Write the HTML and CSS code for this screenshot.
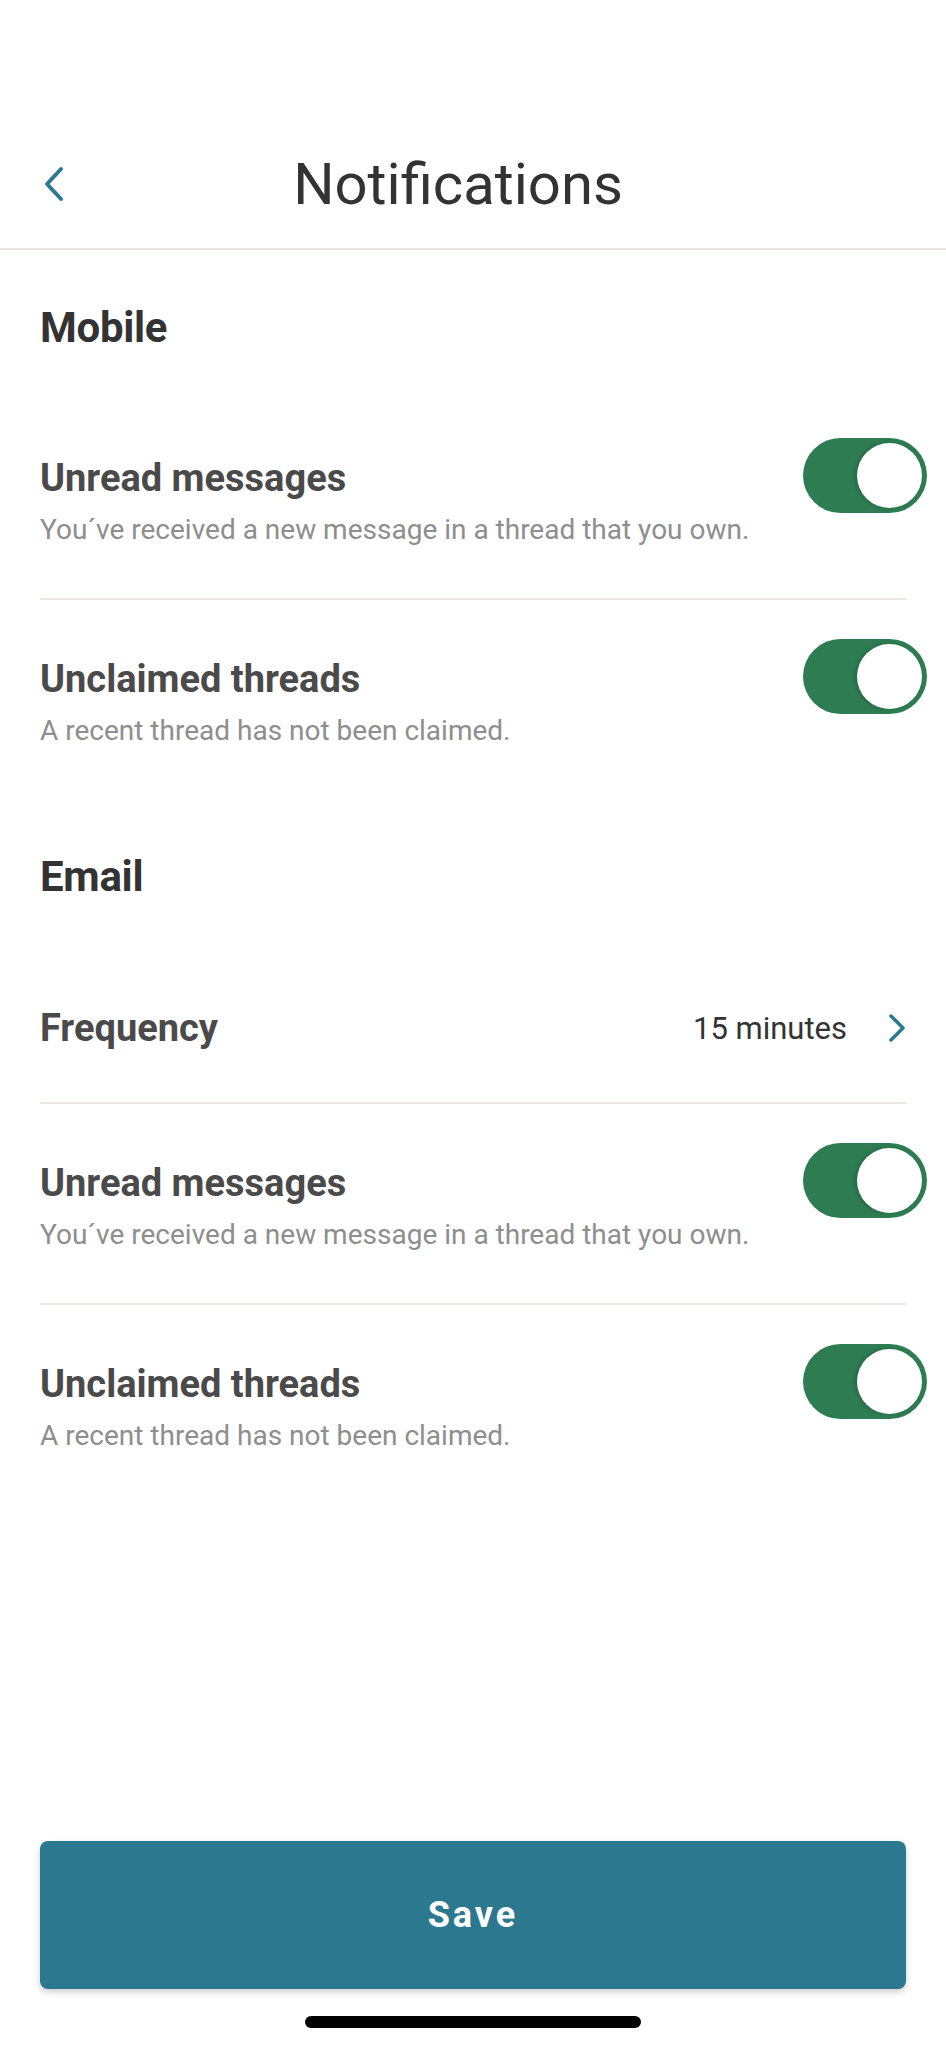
FILE: index.html
```html
<!DOCTYPE html>
<html lang="en">
<head>
    <meta charset="UTF-8">
    <meta name="viewport" content="width=device-width, initial-scale=1.0">
    <title>Notifications</title>
    <link rel="stylesheet" href="styles.css">
</head>
<body>
    <div class="page">
        <header class="topbar">
            <a class="back" href="#">
                <svg width="20" height="36" viewBox="0 0 20 36">
                    <path d="M17 3 L3 18 L17 33" fill="none" stroke="#2b7a91" stroke-width="4" stroke-linecap="round" stroke-linejoin="round"/>
                </svg>
            </a>
            <h1 class="title">Notifications</h1>
            <div class="spacer"></div>
        </header>

        <section class="section">
            <h2>Mobile</h2>
            <div class="row">
                <div class="row-text">
                    <div class="row-title">Unread messages</div>
                    <div class="row-sub">You´ve received a new message in a thread that you own.</div>
                </div>
                <div class="toggle"><span class="knob"></span></div>
            </div>
            <div class="row">
                <div class="row-text">
                    <div class="row-title">Unclaimed threads</div>
                    <div class="row-sub">A recent thread has not been claimed.</div>
                </div>
                <div class="toggle"><span class="knob"></span></div>
            </div>
        </section>

        <section class="section">
            <h2>Email</h2>
            <div class="row row-link">
                <div class="row-title">Frequency</div>
                <div class="row-value">
                    <span>15 minutes</span>
                    <svg width="18" height="30" viewBox="0 0 18 30">
                        <path d="M3 3 L15 15 L3 27" fill="none" stroke="#2b7a91" stroke-width="3.5" stroke-linecap="round" stroke-linejoin="round"/>
                    </svg>
                </div>
            </div>
            <div class="row">
                <div class="row-text">
                    <div class="row-title">Unread messages</div>
                    <div class="row-sub">You´ve received a new message in a thread that you own.</div>
                </div>
                <div class="toggle"><span class="knob"></span></div>
            </div>
            <div class="row">
                <div class="row-text">
                    <div class="row-title">Unclaimed threads</div>
                    <div class="row-sub">A recent thread has not been claimed.</div>
                </div>
                <div class="toggle"><span class="knob"></span></div>
            </div>
        </section>

        <footer class="footer">
            <button class="save" type="button">Save</button>
            <div class="home-bar"></div>
        </footer>
    </div>
</body>
</html>
```

FILE: styles.css
```css
html, body {
    margin: 0;
    padding: 0;
    background-color: #fff;
}
body {
    font-family: Roboto, "Liberation Sans", sans-serif;
    color: #333;
}
.page {
    width: 946px;
    min-height: 2048px;
    display: flex;
    flex-direction: column;
}
.topbar {
    height: 250px;
    box-sizing: border-box;
    display: flex;
    align-items: flex-end;
    padding-bottom: 29px;
    border-bottom: 2px solid #e6e2dc;
}
.back {
    width: 100px;
    box-sizing: border-box;
    padding-left: 44px;
    display: flex;
    align-items: center;
    height: 70px;
}
.title {
    flex: 1;
    margin: 0;
    text-align: center;
    font-size: 58px;
    line-height: 70px;
    font-weight: 400;
    color: #333;
}
.spacer {
    width: 130px;
}
.section {
    padding: 53px 40px 0;
}
.section h2 {
    margin: 0 0 46px;
    font-size: 42px;
    line-height: 50px;
    font-weight: 700;
    color: #333;
    letter-spacing: -0.3px;
}
.row {
    display: flex;
    justify-content: space-between;
    align-items: flex-start;
    padding: 56px 0 51px;
    border-top: 2px solid #e9e6e1;
}
.section h2 + .row {
    border-top: none;
}
.row-title {
    font-size: 38px;
    line-height: 46px;
    font-weight: 700;
    color: #4a4a4a;
}
.row-sub {
    margin-top: 12px;
    font-size: 28px;
    line-height: 34px;
    color: #8e8e8e;
}
.row-link {
    align-items: center;
    padding: 57px 0 51px;
}
.row-value {
    display: flex;
    align-items: center;
    gap: 41px;
    font-size: 31px;
    color: #333;
}
.row-value svg {
    display: block;
}
.toggle {
    width: 124px;
    height: 75px;
    margin-top: -17px;
    margin-right: -21px;
    box-sizing: border-box;
    padding: 5px;
    border-radius: 38px;
    background-color: #2e7d52;
    display: flex;
    justify-content: flex-end;
}
.knob {
    width: 65px;
    height: 65px;
    border-radius: 50%;
    background-color: #fff;
    box-shadow: -2px 0 4px rgba(0, 0, 0, 0.18);
}
.footer {
    margin-top: auto;
    padding: 0 40px 20px;
    display: flex;
    flex-direction: column;
    align-items: center;
}
.save {
    width: 100%;
    height: 148px;
    border: none;
    border-radius: 8px;
    background-color: #2b788f;
    color: #fff;
    font-family: Roboto, "Liberation Sans", sans-serif;
    font-size: 36px;
    font-weight: 700;
    letter-spacing: 3px;
    box-shadow: 0 3px 6px rgba(0, 0, 0, 0.2);
    cursor: pointer;
}
.home-bar {
    width: 336px;
    height: 12px;
    margin-top: 27px;
    border-radius: 6px;
    background-color: #000;
}
```
